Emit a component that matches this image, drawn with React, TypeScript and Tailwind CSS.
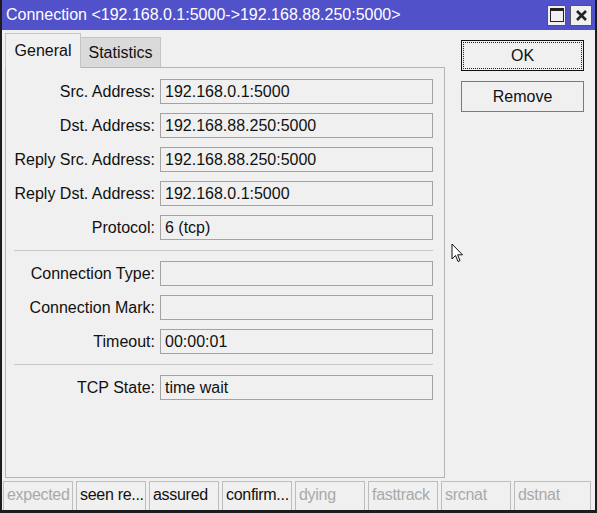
import React from 'react';

const FONT = { fontFamily: '"Liberation Sans", Arial, sans-serif' };

type Row = { label: string; value: string } | 'sep';

const ROWS: Row[] = [
  { label: 'Src. Address:', value: '192.168.0.1:5000' },
  { label: 'Dst. Address:', value: '192.168.88.250:5000' },
  { label: 'Reply Src. Address:', value: '192.168.88.250:5000' },
  { label: 'Reply Dst. Address:', value: '192.168.0.1:5000' },
  { label: 'Protocol:', value: '6 (tcp)' },
  'sep',
  { label: 'Connection Type:', value: '' },
  { label: 'Connection Mark:', value: '' },
  { label: 'Timeout:', value: '00:00:01' },
  'sep',
  { label: 'TCP State:', value: 'time wait' },
];

const FLAGS = [
  { name: 'expected', on: false },
  { name: 'seen re...', on: true },
  { name: 'assured', on: true },
  { name: 'confirm...', on: true },
  { name: 'dying', on: false },
  { name: 'fasttrack', on: false },
  { name: 'srcnat', on: false },
  { name: 'dstnat', on: false },
];

function Field({ label, value }: { label: string; value: string }) {
  return (
    <div className="flex items-center h-[25px]">
      <div className="w-[149px] text-right text-[16px] text-[#111] leading-none">{label}</div>
      <div className="ml-[5px] w-[273px] h-[25px] border border-[#a3a3a3] bg-[#f0f0f0] px-[4px] flex items-center text-[16px] text-[#111] leading-none">
        {value}
      </div>
    </div>
  );
}

export default function App() {
  return (
    <div
      className="relative w-[597px] h-[513px] flex flex-col bg-[#f0f0f0] border-l-2 border-r-2 border-b-[3px] border-[#1c1c1c] overflow-hidden"
      style={FONT}
    >
      {/* title bar */}
      <div className="h-[30px] shrink-0 bg-[#5151c9] flex items-center pl-[4px] pr-[3px]">
        <span className="text-white text-[16px] leading-none">
          Connection &lt;192.168.0.1:5000-&gt;192.168.88.250:5000&gt;
        </span>
        <div className="ml-auto flex gap-[4px] items-center">
          <div className="w-[19px] h-[21px] bg-[#f0f0f0] border border-[#555] flex items-center justify-center">
            <div className="w-[14px] h-[14px] border-[1.5px] border-[#222] border-t-[3px]" />
          </div>
          <div className="w-[22px] h-[21px] bg-[#f0f0f0] border border-[#555] flex items-center justify-center">
            <svg width="13" height="13" viewBox="0 0 13 13">
              <path d="M2 2 L11 11 M11 2 L2 11" stroke="#222" strokeWidth="2.6" />
            </svg>
          </div>
        </div>
      </div>

      {/* body */}
      <div className="flex flex-1 min-h-0">
        <div className="pl-[3px] pt-[3px] flex flex-col">
          <div className="h-[34px] flex items-end">
            <div className="relative z-10 h-[35px] -mb-px w-[76px] bg-[#f0f0f0] border-l border-t border-r border-[#c4c4c4] flex items-center justify-center text-[16px] text-[#111] leading-none">
              General
            </div>
            <div className="h-[30px] w-[80px] bg-[#dadada] border-t border-r border-[#c4c4c4] flex items-center justify-center text-[16px] text-[#111] leading-none">
              Statistics
            </div>
          </div>
          <div className="w-[440px] h-[411px] border border-[#b4b4b4] pt-[11px] flex flex-col gap-[9px]">
            {ROWS.map((r, i) =>
              r === 'sep' ? (
                <div key={i} className="ml-[8px] w-[419px] my-[1px] h-px bg-[#c8c8c8]" />
              ) : (
                <Field key={i} label={r.label} value={r.value} />
              )
            )}
          </div>
        </div>

        <div className="pl-[16px] pt-[10px] flex flex-col gap-[10px]">
          <button
            type="button"
            className="w-[123px] h-[31px] border border-[#111] bg-[#f0f0f0] p-[1px] text-[16px] text-[#111]"
          >
            <div className="w-full h-full border border-dotted border-[#222] flex items-center justify-center leading-none">
              OK
            </div>
          </button>
          <button
            type="button"
            className="w-[123px] h-[31px] border border-[#7a7a7a] bg-[#f0f0f0] flex items-center justify-center text-[16px] text-[#111] leading-none"
          >
            Remove
          </button>
        </div>
      </div>

      {/* status flags */}
      <div className="h-[32px] shrink-0 pt-[3px] pl-[1px] flex gap-[3px]">
        {FLAGS.map((f, i) => (
          <div
            key={f.name}
            className={`${i === FLAGS.length - 1 ? 'w-[77px]' : 'w-[70px]'} h-[29px] border-l border-t border-r border-[#bdbdbd] pl-[3px] pt-[5px] text-[16px] leading-none whitespace-nowrap tracking-[-0.3px] ${
              f.on ? 'text-[#111]' : 'text-[#a9a9a9]'
            }`}
          >
            {f.name}
          </div>
        ))}
      </div>

      {/* mouse pointer */}
      <svg className="absolute left-[449px] top-[243px]" width="13" height="21" viewBox="0 0 13 21">
        <path
          d="M1 1 L1 16 L4.5 12.5 L7 18.5 L9 17.6 L6.6 11.8 L11.5 11.8 Z"
          fill="#fff"
          stroke="#111"
          strokeWidth="1"
          strokeLinejoin="round"
        />
      </svg>
    </div>
  );
}
